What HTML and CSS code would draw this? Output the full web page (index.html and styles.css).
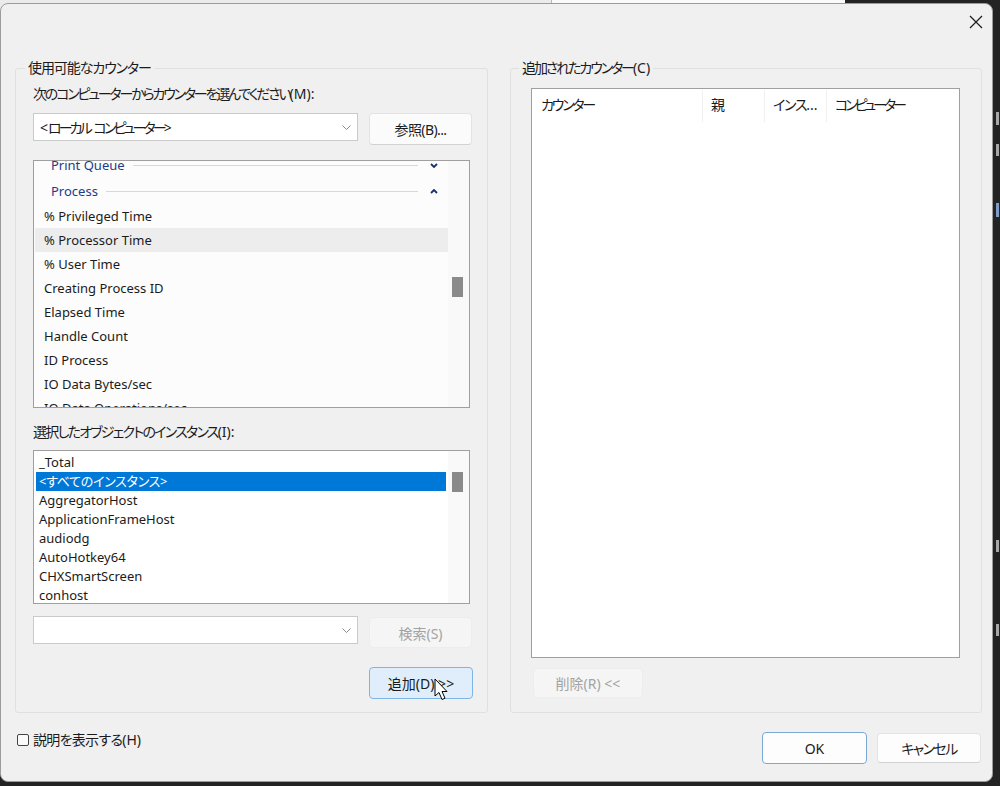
FILE: index.html
```html
<!DOCTYPE html>
<html lang="ja">
<head>
<meta charset="utf-8">
<title>カウンターの追加</title>
<link rel="stylesheet" href="styles.css">
</head>
<body>
<div class="desk">
  <div class="bgwin"><div class="bgwin-a"></div><div class="bgwin-b"></div></div>
  <div class="edge-bits"><span class="bit b1"></span><span class="bit b2"></span><span class="bit b3"></span><span class="bit b4"></span><span class="bit b5"></span></div>

  <div class="dialog">
    <div class="titlebar">
      <svg class="close" width="14" height="14" viewBox="0 0 14 14"><path d="M1 1 L13 13 M13 1 L1 13" stroke="#1a1a1a" stroke-width="1.2" fill="none"/></svg>
    </div>

    <div class="groups">
      <fieldset class="group group-left">
        <legend class="legend-avail">使用可能なカウンター</legend>
        <div class="label label-computer">次のコンピューターからカウンターを選んでください<span class="nl">(M):</span></div>
        <div class="row row-top">
          <div class="combo">
            <span class="combo-text"><span class="nl">&lt;</span>ローカル<span class="nl"> </span>コンピューター<span class="nl">&gt;</span></span>
            <svg class="chev" width="9" height="5" viewBox="0 0 9 5"><path d="M0.5 0.5 L4.5 4.5 L8.5 0.5" stroke="#8a8a8a" stroke-width="1" fill="none"/></svg>
          </div>
          <button class="btn btn-browse">参照(B)...</button>
        </div>

        <div class="list list-counters">
          <div class="list-body">
            <div class="counter-rows">
              <div class="cat"><span class="cat-name">Print Queue</span><span class="cat-line"></span><svg class="cat-chev" width="8" height="5" viewBox="0 0 8 5"><path d="M1 1 L4 4 L7 1" stroke="#1c2f6e" stroke-width="1.8" fill="none"/></svg></div>
              <div class="cat"><span class="cat-name">Process</span><span class="cat-line"></span><svg class="cat-chev" width="8" height="5" viewBox="0 0 8 5"><path d="M1 4 L4 1 L7 4" stroke="#1c2f6e" stroke-width="1.8" fill="none"/></svg></div>
              <div class="item">% Privileged Time</div>
              <div class="item item-hover">% Processor Time</div>
              <div class="item">% User Time</div>
              <div class="item">Creating Process ID</div>
              <div class="item">Elapsed Time</div>
              <div class="item">Handle Count</div>
              <div class="item">ID Process</div>
              <div class="item">IO Data Bytes/sec</div>
              <div class="item">IO Data Operations/sec</div>
            </div>
          </div>
          <div class="scroll"><div class="thumb thumb-counters"></div></div>
        </div>

        <div class="label label-inst">選択したオブジェクトのインスタンス<span class="nl">(I):</span></div>
        <div class="list list-instances">
          <div class="list-body">
            <div class="inst-rows">
              <div class="inst">_Total</div>
              <div class="inst inst-selected">&lt;すべてのインスタンス&gt;</div>
              <div class="inst">AggregatorHost</div>
              <div class="inst">ApplicationFrameHost</div>
              <div class="inst">audiodg</div>
              <div class="inst">AutoHotkey64</div>
              <div class="inst">CHXSmartScreen</div>
              <div class="inst">conhost</div>
            </div>
          </div>
          <div class="scroll"><div class="thumb thumb-instances"></div></div>
        </div>

        <div class="row row-search">
          <div class="combo">
            <span class="combo-text"></span>
            <svg class="chev" width="9" height="5" viewBox="0 0 9 5"><path d="M0.5 0.5 L4.5 4.5 L8.5 0.5" stroke="#8a8a8a" stroke-width="1" fill="none"/></svg>
          </div>
          <button class="btn btn-disabled btn-search">検索(S)</button>
        </div>

        <div class="row row-add">
          <button class="btn btn-add">追加(D) &gt;&gt;
            <svg class="cursor" width="16" height="23" viewBox="0 0 16 23"><path d="M1 1 L1 18 L5 14.5 L8 21.5 L11 20.2 L8 13.5 L13 13.5 Z" fill="#ffffff" stroke="#000000" stroke-width="1" stroke-linejoin="round"/></svg>
          </button>
        </div>
      </fieldset>

      <fieldset class="group group-right">
        <legend class="legend-added">追加されたカウンター<span class="nl">(C)</span></legend>
        <div class="listview">
          <div class="lv-head">
            <div class="lv-col lv-c1">カウンター</div>
            <div class="lv-col lv-c2">親</div>
            <div class="lv-col lv-c3">インス<span class="nl">...</span></div>
            <div class="lv-col lv-c4">コンピューター</div>
          </div>
        </div>
        <div class="row row-del">
          <button class="btn btn-disabled btn-del">削除(R) &lt;&lt;</button>
        </div>
      </fieldset>
    </div>

    <div class="footer">
      <label class="check"><span class="box"></span><span class="check-text">説明を表示する<span class="nl">(H)</span></span></label>
      <div class="footer-buttons">
        <button class="btn btn-ok">OK</button>
        <button class="btn btn-cancel">キャンセル</button>
      </div>
    </div>
  </div>
</div>
</body>
</html>
```

FILE: styles.css
```css
* { box-sizing: border-box; }

html, body {
  margin: 0;
  padding: 0;
}

body {
  width: 1000px;
  height: 786px;
  overflow: hidden;
  background: #232323;
  font-family: "Noto Sans", "Noto Sans CJK JP", sans-serif;
  font-size: 14px;
  color: #1b1b1b;
  font-feature-settings: "palt";
}

.nl { letter-spacing: normal; }

.desk {
  position: relative;
  width: 1000px;
  height: 786px;
}

/* background windows peeking out */
.bgwin {
  position: absolute;
  left: 0;
  top: 0;
  width: 845px;
  height: 14px;
  display: flex;
}
.bgwin-a {
  width: 552px;
  background: #ebebeb;
  border-right: 1px solid #b8b8b8;
}
.bgwin-b {
  flex: 1;
  background: #fafafa;
}

.edge-bits {
  position: absolute;
  left: 995px;
  top: 0;
  width: 5px;
  height: 786px;
}
.bit {
  position: absolute;
  left: 1px;
  width: 3px;
  background: #a8a8a8;
}
.b1 { top: 112px; height: 13px; }
.b2 { top: 144px; height: 12px; }
.b3 { top: 203px; height: 14px; background: #7f9cc8; }
.b4 { top: 540px; height: 12px; }
.b5 { top: 624px; height: 12px; }

/* dialog window */
.dialog {
  position: absolute;
  left: 0;
  top: 3px;
  width: 993px;
  height: 779px;
  background: #f0f0f0;
  border: 1px solid #9c9c9c;
  border-radius: 8px;
  padding: 0 10px 0 14px;
  display: flex;
  flex-direction: column;
}

.titlebar {
  height: 54px;
  display: flex;
  justify-content: flex-end;
  align-items: flex-start;
  padding-top: 11px;
}
.close {
  margin-right: -1px;
  display: block;
}

.groups {
  display: flex;
  gap: 22px;
}

.group {
  margin: 0;
  border: 1px solid #e0e0e0;
  border-radius: 3px;
  min-width: 0;
}
.group legend {
  line-height: 20px;
  padding: 0 3px;
  color: #1b1b1b;
  white-space: nowrap;
}

.group-left {
  width: 473px;
  padding: 6px 15px 13px 17px;
}
.legend-avail {
  margin-left: -8px;
  letter-spacing: -1.1px;
}

.group-right {
  width: 472px;
  padding: 10px 21px 14px 20px;
  display: flex;
  flex-direction: column;
}
.legend-added {
  margin-left: -12px;
  letter-spacing: -2.1px;
}

.label {
  line-height: 20px;
  white-space: nowrap;
}
.label-computer { letter-spacing: -2.2px; }
.label-inst {
  margin-top: 14px;
  letter-spacing: -1.75px;
}

.row {
  display: flex;
  align-items: flex-start;
  gap: 11px;
}
.row-top { margin-top: 9px; }
.row-search { margin-top: 12px; }
.row-add {
  margin-top: 19px;
  justify-content: flex-end;
}
.row-del { margin-top: 10px; }

.combo {
  width: 325px;
  height: 28px;
  background: #ffffff;
  border: 1px solid #cacaca;
  display: flex;
  align-items: center;
  justify-content: space-between;
  padding: 0 6px 0 6px;
}
.combo-text {
  white-space: pre;
  letter-spacing: -2.9px;
}
.chev { display: block; }

.btn {
  font-family: inherit;
  font-size: 14px;
  font-feature-settings: "palt";
  color: #1b1b1b;
  background: #fbfbfb;
  border: 1px solid #e3e3e3;
  border-bottom-color: #d2d2d2;
  border-radius: 4px;
  padding: 0;
  margin: 0;
  position: relative;
  white-space: nowrap;
}
.btn-browse {
  width: 103px;
  height: 32px;
  letter-spacing: -0.6px;
}
.btn-disabled {
  background: #f5f5f5;
  border-color: #ededed;
  color: #a3a3a3;
}
.btn-search {
  width: 103px;
  height: 31px;
  margin-top: 1px;
}
.btn-add {
  width: 104px;
  height: 32px;
  background: #dfeefa;
  border: 1px solid #7db6e6;
  margin-right: -1px;
}
.cursor {
  position: absolute;
  left: 64px;
  top: 10px;
}
.btn-del {
  width: 110px;
  height: 30px;
  margin-left: 2px;
}

/* lists */
.list {
  width: 437px;
  background: #ffffff;
  border: 1px solid #9f9f9f;
  display: flex;
  overflow: hidden;
}
.list-body {
  flex: 1;
  overflow: hidden;
  position: relative;
}
.scroll {
  width: 21px;
  background: #f9f9f9;
  padding-left: 4px;
}
.thumb {
  width: 11px;
  height: 20px;
  background: #8a8a8a;
}

.list-counters {
  margin-top: 15px;
  height: 248px;
}
.thumb-counters { margin-top: 116px; }

.counter-rows {
  margin-top: -9px;
  background: #fcfcfc;
  font-size: 13px;
}
.cat, .item {
  white-space: nowrap;
}
.cat {
  height: 26px;
  display: flex;
  align-items: center;
  padding-left: 17px;
  padding-right: 10px;
  color: #1f3a8a;
}
.cat-line {
  flex: 1;
  height: 1px;
  background: #d3d9e4;
  margin: 0 12px 0 8px;
}
.cat-chev { display: block; }
.item {
  height: 24px;
  line-height: 24px;
  padding-left: 10px;
  color: #1b1b1b;
}
.item-hover {
  background: #ededed;
  margin-left: 1px;
  padding-left: 9px;
}

.list-instances {
  margin-top: 8px;
  height: 154px;
}
.thumb-instances { margin-top: 21px; }
.inst-rows {
  margin-top: 2px;
  font-size: 13px;
}
.inst {
  height: 19px;
  line-height: 19px;
  padding-left: 5px;
  white-space: nowrap;
}
.inst-selected {
  background: #0078d7;
  color: #ffffff;
  margin-left: 2px;
  margin-right: 2px;
  padding-left: 3px;
  letter-spacing: -0.3px;
}

/* right list view */
.listview {
  width: 429px;
  height: 570px;
  background: #ffffff;
  border: 1px solid #9f9f9f;
}
.lv-head {
  display: flex;
  height: 32px;
  margin-top: 1px;
}
.lv-col {
  line-height: 30px;
  padding-left: 8px;
  white-space: nowrap;
  border-right: 1px solid #f0f0f0;
}
.lv-c1 {
  width: 171px;
  padding-left: 9px;
  letter-spacing: -2.2px;
}
.lv-c2 { width: 62px; }
.lv-c3 {
  width: 62px;
  letter-spacing: -1.3px;
}
.lv-c4 {
  flex: 1;
  border-right: none;
  letter-spacing: -3.1px;
}

/* footer */
.footer {
  margin-top: 19px;
  display: flex;
  justify-content: space-between;
  align-items: flex-start;
  height: 32px;
}
.check {
  display: flex;
  align-items: center;
  gap: 4px;
  margin-left: 2px;
  line-height: 16px;
  white-space: nowrap;
}
.check-text { letter-spacing: -0.7px; }
.box {
  width: 12px;
  height: 12px;
  border: 1px solid #444444;
  border-radius: 2px;
  background: #fafafa;
}
.footer-buttons {
  display: flex;
  gap: 10px;
  align-items: center;
  margin-right: 1px;
}
.btn-ok {
  width: 105px;
  height: 32px;
  border: 1px solid #7ba9d6;
  background: #fdfdfd;
}
.btn-cancel {
  width: 104px;
  height: 30px;
  background: #fdfdfd;
  letter-spacing: -1.6px;
}
```
